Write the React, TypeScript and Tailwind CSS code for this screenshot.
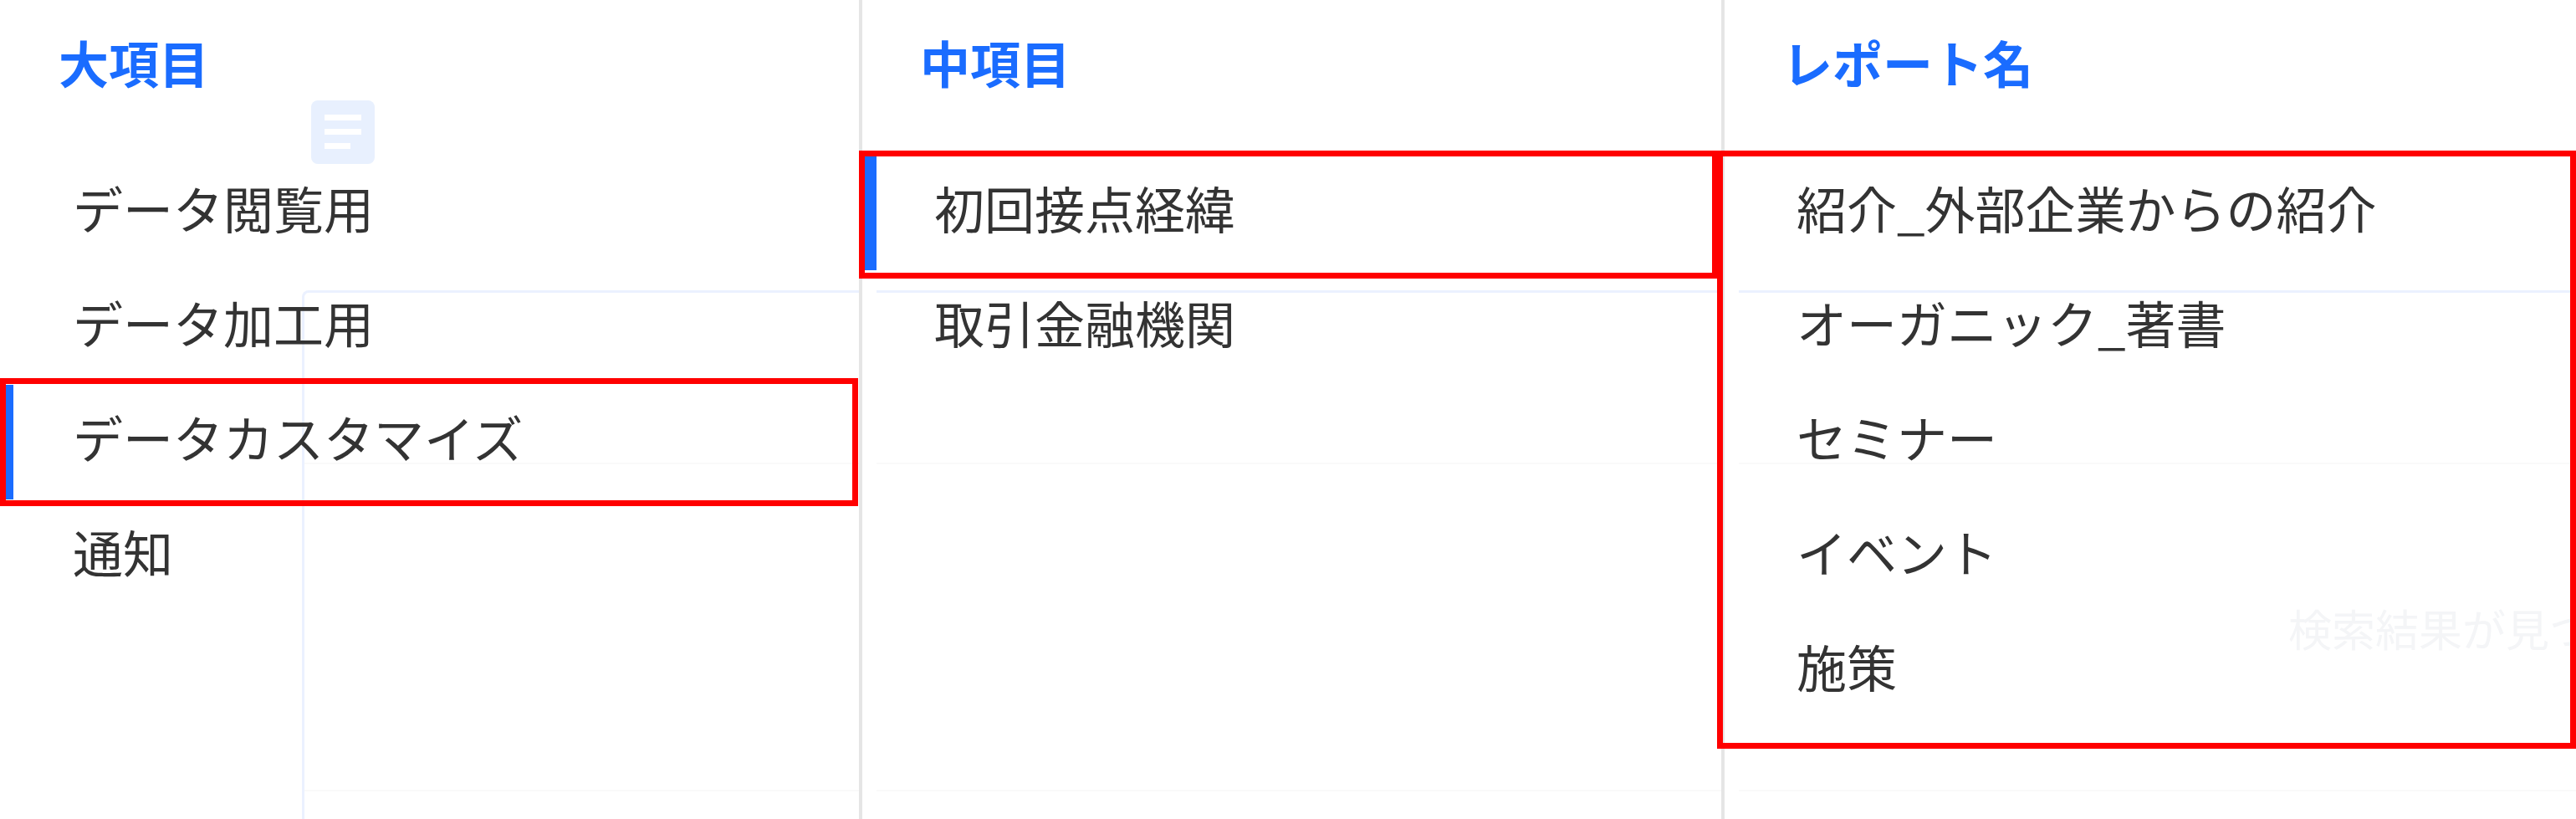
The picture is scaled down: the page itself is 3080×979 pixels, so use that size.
import React from "react";

const colA = ["データ閲覧用", "データ加工用", "データカスタマイズ", "通知"];
const colB = ["初回接点経緯", "取引金融機関"];
const colC = ["紹介_外部企業からの紹介", "オーガニック_著書", "セミナー", "イベント", "施策"];

function Row({ label, bar, pad, box }: { label: string; bar?: string; pad: string; box?: string }) {
  return (
    <div className={`relative flex h-[137px] items-center pb-[14px] ${pad} text-[60px] leading-none text-[#333333]`}>
      {bar && <span className={`absolute bottom-0 top-0 w-[16px] bg-[#1a6cff] ${bar}`} />}
      <span className="blur-[0.7px]">{label}</span>
      {box && <span className={`pointer-events-none absolute border-[7px] border-[#ff0000] ${box}`} />}
    </div>
  );
}

function Heading({ label, pad }: { label: string; pad: string }) {
  return (
    <div className={`flex h-[186px] items-center pb-[39px] ${pad} text-[60px] font-bold leading-none text-[#1a6cff]`}>
      <span className="blur-[0.7px]">{label}</span>
    </div>
  );
}

function BackdropCell({ pad, inner, children }: { pad: string; inner?: string; children?: React.ReactNode }) {
  return (
    <div className={`h-full min-w-0 ${pad}`}>
      <div className={`h-full border-t-[3px] border-[#ebf1ff] ${inner ?? ""}`}>
        <div className="h-[205px] border-b-[2px] border-[#fafafa]" />
        <div className="h-[391px] overflow-hidden border-b-[2px] border-[#fafafa]">{children}</div>
      </div>
    </div>
  );
}

export default function App() {
  return (
    <div className="relative h-[979px] w-[3080px] overflow-hidden bg-white font-['Noto_Sans_CJK_JP',sans-serif]">
      {/* the page dimmed behind the menu */}
      <div className="absolute inset-0 flex flex-col pt-[120px] blur-[0.7px]">
        <div className="ml-[372px] flex h-[76px] w-[76px] flex-col items-start gap-[10px] rounded-[8px] bg-[#e8f0fe] pl-[16px] pt-[17px]">
          <span className="h-[7px] w-[44px] bg-white" />
          <span className="h-[7px] w-[44px] bg-white" />
          <span className="h-[7px] w-[31px] bg-white" />
        </div>
        <div className="mt-[151px] grid min-h-0 flex-1 grid-cols-[1031px_1031px_1018px]">
          <BackdropCell pad="pl-[361px]" inner="rounded-tl-[8px] border-l-[3px]" />
          <BackdropCell pad="pl-[17px]" />
          <BackdropCell pad="pl-[17px]">
            <div className="whitespace-nowrap pl-[657px] pt-[166px] text-[52px] leading-[60px] text-[#f4f5f7]">
              検索結果が見つかりません
            </div>
          </BackdropCell>
        </div>
      </div>

      {/* menu columns */}
      <div className="relative grid h-full grid-cols-[1031px_1031px_1018px]">
        <div className="border-r-[4px] border-[#e5e5e5]">
          <Heading label="大項目" pad="pl-[70px]" />
          {colA.map((t, i) => (
            <Row
              key={t}
              label={t}
              pad="pl-[87px]"
              bar={i === 2 ? "left-0" : undefined}
              box={i === 2 ? "-inset-y-[8px] left-0 right-px" : undefined}
            />
          ))}
        </div>
        <div className="border-r-[4px] border-[#e5e5e5]">
          <Heading label="中項目" pad="pl-[69px]" />
          {colB.map((t, i) => (
            <Row
              key={t}
              label={t}
              pad="pl-[86px]"
              bar={i === 0 ? "left-px" : undefined}
              box={i === 0 ? "-bottom-[10px] -left-[4px] -top-[6px] right-[4px]" : undefined}
            />
          ))}
        </div>
        <div>
          <Heading label="レポート名" pad="pl-[69px]" />
          <div className="relative">
            {colC.map((t) => (
              <Row key={t} label={t} pad="pl-[86px]" />
            ))}
            <span className="pointer-events-none absolute -bottom-[24px] -left-[9px] -top-[6px] right-0 border-[7px] border-[#ff0000]" />
          </div>
        </div>
      </div>
    </div>
  );
}
